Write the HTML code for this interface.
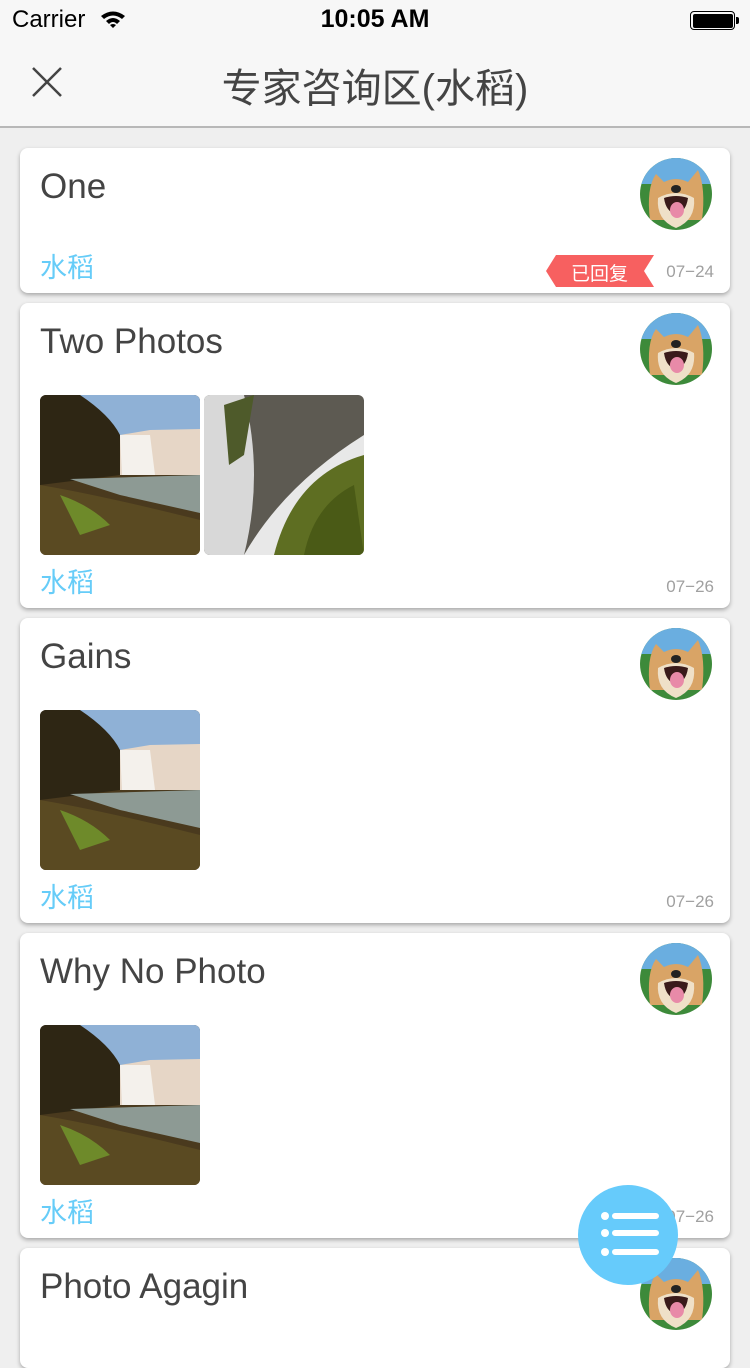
<!DOCTYPE html>
<html><head><meta charset="utf-8"><style>
*{margin:0;padding:0;box-sizing:border-box}
body{width:750px;height:1334px;overflow:hidden;background:#efefef;font-family:"Liberation Sans","Noto Sans CJK SC",sans-serif;position:relative}
.hdr{position:absolute;left:0;top:0;width:750px;height:128px;background:#f7f7f7;border-bottom:2px solid #b8b8b8}
.card{position:absolute;left:20px;width:710px;background:#fff;border-radius:8px;box-shadow:0 2px 4px rgba(0,0,0,.3)}
.t{position:absolute;left:20px;top:19px;font-size:35px;color:#444}
.av{position:absolute;left:620px;top:10px;width:72px;height:72px}
.tag{position:absolute;left:20px;font-size:27px;color:#66ccf8;font-family:"Noto Sans CJK SC",sans-serif}
.dt{position:absolute;right:16px;font-size:17px;color:#a0a0a0}
.img{position:absolute;width:160px;height:160px;border-radius:6px;overflow:hidden}
</style></head><body>
<svg width="0" height="0" style="position:absolute"><defs>
<symbol id="dog" viewBox="0 0 72 72">
<clipPath id="c"><circle cx="36" cy="36" r="36"/></clipPath>
<g clip-path="url(#c)">
<rect width="72" height="72" fill="#3d8a3a"/>
<rect width="72" height="26" fill="#6aaee0"/>
<path d="M10 62 Q6 30 16 16 L24 24 Q36 18 48 24 L58 12 Q66 30 62 62 Z" fill="#d9a466"/>
<path d="M18 40 Q36 30 54 40 Q56 62 36 70 Q16 62 18 40Z" fill="#efe0c8"/>
<ellipse cx="36" cy="31" rx="5" ry="4" fill="#222"/>
<path d="M24 40 Q36 36 48 40 Q46 54 36 56 Q26 54 24 40Z" fill="#3a1a1a"/>
<ellipse cx="37" cy="52" rx="7" ry="8" fill="#e88aa8"/>
</g></symbol>
<symbol id="w1" viewBox="0 0 160 160">
<rect width="160" height="160" fill="#4a3a1e"/>
<rect x="40" width="120" height="50" fill="#8fb1d6"/>
<path d="M40 0 L0 0 L0 90 L80 80 L80 40 Q70 20 40 0Z" fill="#2e2614"/>
<path d="M80 40 L110 35 L160 34 L160 80 L80 80Z" fill="#e6d6c6"/>
<path d="M80 40 L110 40 L115 80 L82 80Z" fill="#f4f1ec"/>
<path d="M30 84 L160 80 L160 118 L80 100Z" fill="#8d9a94"/>
<path d="M0 90 Q60 100 160 125 L160 160 L0 160Z" fill="#5a4a22"/>
<path d="M20 100 Q50 110 70 130 L40 140 Z" fill="#6e8a2a"/>
</symbol>
<symbol id="w2" viewBox="0 0 160 160">
<rect width="160" height="160" fill="#5d5a52"/>
<path d="M0 0 L40 0 Q60 80 40 160 L0 160Z" fill="#d8d8d8"/>
<path d="M20 10 L50 0 L40 60 L25 70Z" fill="#4e5a2a"/>
<path d="M40 160 Q80 90 160 40 L160 70 Q110 100 70 160Z" fill="#e8e8e8"/>
<path d="M70 160 Q90 80 160 60 L160 160Z" fill="#5e6e22"/>
<path d="M100 160 Q110 110 150 90 L160 160Z" fill="#4a5a16"/>
</symbol>
</defs></svg>

<div class="hdr">
<div style="position:absolute;left:12px;top:6px;font-size:24px;color:#000">Carrier</div>
<svg style="position:absolute;left:100px;top:10px" width="26" height="18" viewBox="0 0 26 18"><path d="M1 6 Q13 -3 25 6 L22 9 Q13 2 4 9Z M6 11 Q13 5 20 11 L17 14 Q13 10 9 14Z M13 18 L10 15 Q13 13 16 15Z" fill="#000"/></svg>
<div style="position:absolute;left:0;width:750px;top:5px;text-align:center;font-size:25px;font-weight:bold;color:#000">10:05 AM</div>
<div style="position:absolute;left:690px;top:11px;width:45px;height:19px;border:1.5px solid #000;border-radius:4px;padding:1.5px"><div style="width:100%;height:100%;background:#000;border-radius:2px"></div></div>
<div style="position:absolute;left:736px;top:17px;width:3px;height:7px;background:#000;border-radius:0 2px 2px 0"></div>
<svg style="position:absolute;left:31px;top:66px" width="32" height="32"><path d="M2 2 L30 30 M30 2 L2 30" stroke="#444" stroke-width="2.5"/></svg>
<div style="position:absolute;left:0;width:750px;top:56px;text-align:center;font-size:40px;color:#444">专家咨询区(水稻)</div>
</div>

<div class="card" style="top:148px;height:145px">
<div class="t">One</div><svg class="av"><use href="#dog"/></svg>
<div class="tag" style="top:98px">水稻</div>
<svg style="position:absolute;left:526px;top:107px" width="108" height="32"><path d="M10 0 L108 0 L98 16 L108 32 L10 32 L0 16Z" fill="#f76060"/></svg>
<div style="position:absolute;left:551px;top:111px;font-size:19px;color:#fff;font-family:'Noto Sans CJK SC',sans-serif">已回复</div>
<div class="dt" style="top:114px">07−24</div>
</div>

<div class="card" style="top:303px;height:305px">
<div class="t">Two Photos</div><svg class="av"><use href="#dog"/></svg>
<svg class="img" style="left:20px;top:92px"><use href="#w1"/></svg>
<svg class="img" style="left:184px;top:92px"><use href="#w2"/></svg>
<div class="tag" style="top:258px">水稻</div><div class="dt" style="top:274px">07−26</div>
</div>

<div class="card" style="top:618px;height:305px">
<div class="t">Gains</div><svg class="av"><use href="#dog"/></svg>
<svg class="img" style="left:20px;top:92px"><use href="#w1"/></svg>
<div class="tag" style="top:258px">水稻</div><div class="dt" style="top:274px">07−26</div>
</div>

<div class="card" style="top:933px;height:305px">
<div class="t">Why No Photo</div><svg class="av"><use href="#dog"/></svg>
<svg class="img" style="left:20px;top:92px"><use href="#w1"/></svg>
<div class="tag" style="top:258px">水稻</div><div class="dt" style="top:274px">07−26</div>
</div>

<div class="card" style="top:1248px;height:120px">
<div class="t">Photo Agagin</div><svg class="av"><use href="#dog"/></svg>
</div>

<svg style="position:absolute;left:578px;top:1185px" width="100" height="100">
<circle cx="50" cy="50" r="50" fill="#66cbfb"/>
<circle cx="27" cy="31" r="4" fill="#fff"/><circle cx="27" cy="48" r="4" fill="#fff"/><circle cx="27" cy="67" r="4" fill="#fff"/>
<path d="M37 31 H78 M37 48 H78 M37 67 H78" stroke="#fff" stroke-width="6" stroke-linecap="round"/>
</svg>
</body></html>
